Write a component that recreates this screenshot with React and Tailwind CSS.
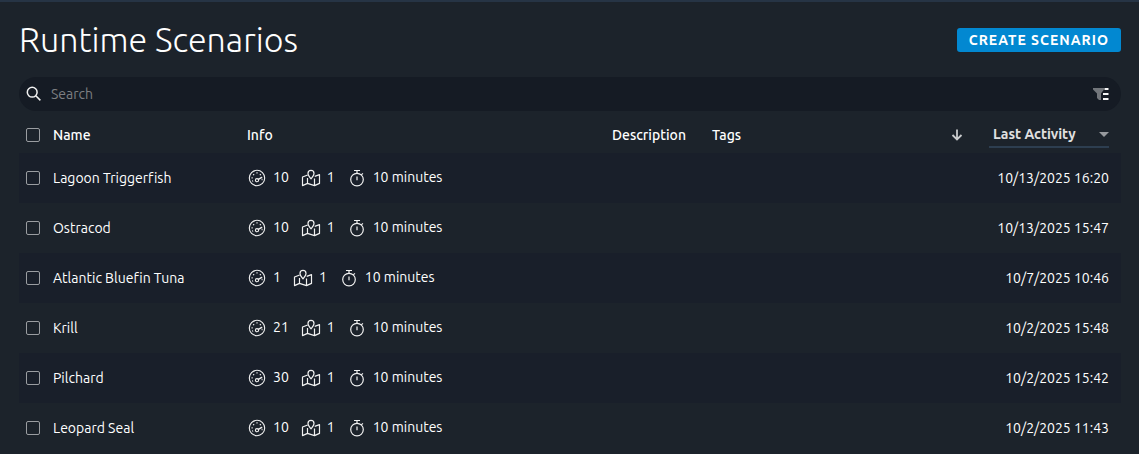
import React, { useState } from "react";

const scenarios = [
  { name: "Lagoon Triggerfish", speed: 10, maps: 1, duration: "10 minutes", activity: "10/13/2025 16:20" },
  { name: "Ostracod", speed: 10, maps: 1, duration: "10 minutes", activity: "10/13/2025 15:47" },
  { name: "Atlantic Bluefin Tuna", speed: 1, maps: 1, duration: "10 minutes", activity: "10/7/2025 10:46" },
  { name: "Krill", speed: 21, maps: 1, duration: "10 minutes", activity: "10/2/2025 15:48" },
  { name: "Pilchard", speed: 30, maps: 1, duration: "10 minutes", activity: "10/2/2025 15:42" },
  { name: "Leopard Seal", speed: 10, maps: 1, duration: "10 minutes", activity: "10/2/2025 11:43" },
];

const SearchIcon = () => (
  <svg className="h-4 w-4 shrink-0" viewBox="0 0 16 16" fill="none" stroke="#f1f1f1" strokeWidth="1.5" aria-hidden="true">
    <circle cx="6.2" cy="6.2" r="4.9" />
    <path d="M9.8 9.8 14.4 14.4" />
  </svg>
);

const FilterIcon = () => (
  <svg className="h-4 w-4" viewBox="0 0 16 16" aria-hidden="true">
    <path fill="#72767b" d="M0 2h11v1.5L8 7.5V14H6L4 12V7.5L0 3.5z" />
    <path stroke="#f5f5f5" strokeWidth="2" d="M11.5 3H15.5M10 8h5.5M10 13h5.5" />
  </svg>
);

const GaugeIcon = () => (
  <svg className="h-[18px] w-[18px]" viewBox="0 0 18 18" fill="none" stroke="#f1f1f1" strokeWidth="1.1" aria-hidden="true">
    <circle cx="9" cy="9" r="7.7" />
    <circle cx="9" cy="11.2" r="1.6" />
    <path strokeLinecap="round" strokeWidth="1.4" d="m10.4 10.4 3.3-2" />
    <path strokeWidth="1.3" d="M8.4 3.8h1.2M5.2 5.2l.9.9M11.9 6.1l.9-.9M3.5 8.8h1.2M4.2 12.2l.9-.4M13.6 10.5h.9" />
  </svg>
);

const MapIcon = () => (
  <svg className="h-[18px] w-5" viewBox="0 0 20 18" fill="none" stroke="#f1f1f1" strokeWidth="1.2" strokeLinejoin="round" aria-hidden="true">
    <path d="M10 9.8C8.3 7.7 7 6.1 7 4.4a3 3 0 0 1 6 0c0 1.7-1.3 3.3-3 5.4z" />
    <path d="M6.7 6 1.5 8v8.6l5-2.2 7 2.2 5-2.2V5.6L13.7 7.4M6.5 9v5.4M13.5 9.5v7" />
  </svg>
);

const StopwatchIcon = () => (
  <svg className="h-[18px] w-4" viewBox="0 0 16 18" fill="none" stroke="#f1f1f1" strokeWidth="1.2" aria-hidden="true">
    <circle cx="8" cy="10.6" r="6.3" />
    <path d="M5 1.5h6M8 1.5v2.8M12.3 5.9l1.6-1.6M8 7.5v3.8" />
  </svg>
);

const ArrowDownIcon = () => (
  <svg className="h-3 w-3" viewBox="0 0 12 12" fill="none" stroke="#c9cbcd" strokeWidth="1.8" aria-hidden="true">
    <path d="M6 .5v10M1.5 6 6 10.5 10.5 6" />
  </svg>
);

const Checkbox = ({ label, checked, onChange }) => (
  <input
    type="checkbox"
    aria-label={label}
    checked={checked}
    onChange={onChange}
    className="block h-3.5 w-3.5 appearance-none rounded-xs border border-[#9a9da1] checked:bg-[#0288d1]"
  />
);

const ScenarioRow = ({ scenario, checked, onToggle }) => (
  <tr className="h-[50px] odd:bg-[#191f2a]">
    <td className="pl-[7px]">
      <Checkbox label={`Select ${scenario.name}`} checked={checked} onChange={onToggle} />
    </td>
    <td>{scenario.name}</td>
    <td>
      <div className="flex items-center pl-px">
        <GaugeIcon />
        <span className="ml-[7px] pb-0.5">{scenario.speed}</span>
        <span className="ml-3">
          <MapIcon />
        </span>
        <span className="ml-1.5 pb-0.5">{scenario.maps}</span>
        <span className="ml-3.5">
          <StopwatchIcon />
        </span>
        <span className="ml-2 pb-0.5">{scenario.duration}</span>
      </div>
    </td>
    <td></td>
    <td></td>
    <td className="pr-3 text-right">{scenario.activity}</td>
  </tr>
);

export default function App() {
  const [selected, setSelected] = useState([]);

  const toggle = (name) =>
    setSelected((prev) =>
      prev.includes(name) ? prev.filter((n) => n !== name) : [...prev, name]
    );

  const toggleAll = () =>
    setSelected(selected.length === scenarios.length ? [] : scenarios.map((s) => s.name));

  return (
    <div className="min-h-screen border-t-2 border-[#263445] bg-[#1c232b] pr-[18px] pl-[19px] font-['Ubuntu','Noto_Sans',sans-serif] text-sm text-white [font-variant-ligatures:none]">
      <header className="flex h-[75px] items-start justify-between">
        <h1 className="pt-[15px] text-[34px] leading-11 font-light">Runtime Scenarios</h1>
        <button type="button" className="mt-[26px] h-6 rounded-[3px] bg-[#0288d1] px-3 leading-6 font-bold tracking-[1px] uppercase">
          Create Scenario
        </button>
      </header>

      <div className="flex h-[34px] items-center rounded-full bg-[#151b24] pr-3 pl-[7px]">
        <SearchIcon />
        <input
          type="search"
          aria-label="Search scenarios"
          placeholder="Search"
          className="ml-[9px] min-w-0 flex-1 bg-transparent outline-none placeholder:text-[#7d7f82]"
        />
        <button type="button" aria-label="Filter">
          <FilterIcon />
        </button>
      </div>

      <table className="w-full table-fixed">
        <colgroup>
          <col className="w-[34px]" />
          <col className="w-[194px]" />
          <col className="w-[365px]" />
          <col className="w-[100px]" />
          <col />
          <col className="w-[180px]" />
        </colgroup>
        <thead>
          <tr className="h-[42px] text-left">
            <th className="pt-1.5 pl-[7px]">
              <Checkbox
                label="Select all scenarios"
                checked={selected.length === scenarios.length}
                onChange={toggleAll}
              />
            </th>
            <th className="pt-1.5 font-medium">Name</th>
            <th className="pt-1.5 font-medium">Info</th>
            <th className="pt-1.5 font-medium">Description</th>
            <th className="pt-1.5 font-medium">Tags</th>
            <th className="pt-1.5 pr-3">
              <div className="flex items-center justify-end gap-[26px]">
                <button type="button" aria-label="Sort descending">
                  <ArrowDownIcon />
                </button>
                <div className="grid w-[120px] items-center border-b-2 border-[#2d3e50]">
                  <select
                    aria-label="Sort by"
                    className="col-start-1 row-start-1 h-6 w-full appearance-none bg-transparent pl-1 font-bold text-[#e0e0e0] outline-none"
                  >
                    <option>Last Activity</option>
                    <option>Created</option>
                  </select>
                  <svg className="pointer-events-none col-start-1 row-start-1 h-[5px] w-2.5 justify-self-end" viewBox="0 0 10 5" aria-hidden="true">
                    <path fill="#96999d" d="M0 0h10L5 5z" />
                  </svg>
                </div>
              </div>
            </th>
          </tr>
        </thead>
        <tbody>
          {scenarios.map((scenario) => (
            <ScenarioRow
              key={scenario.name}
              scenario={scenario}
              checked={selected.includes(scenario.name)}
              onToggle={() => toggle(scenario.name)}
            />
          ))}
        </tbody>
      </table>
    </div>
  );
}
